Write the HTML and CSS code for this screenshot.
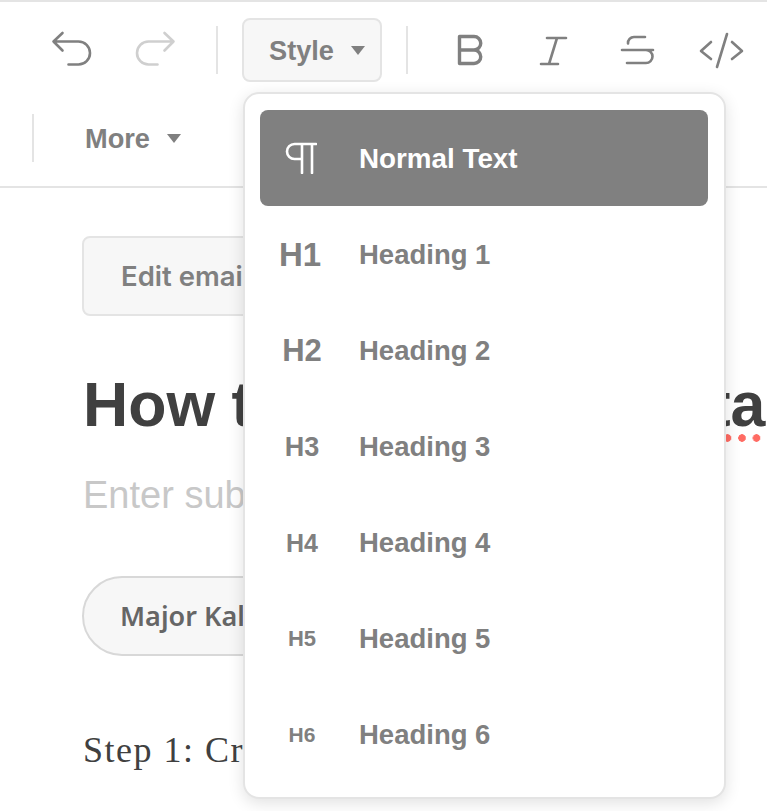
FILE: index.html
```html
<!DOCTYPE html>
<html lang="en">
<head>
<meta charset="utf-8">
<title>Editor</title>
<link rel="stylesheet" href="styles.css">
</head>
<body>
<div class="page">
  <header class="toolbar">
    <div class="row row-first">
      <button class="icon-btn"><svg class="icon" viewBox="51.500 30 40 40"><path d="M62 33l-9 8.500 9 9M53 41.500H78a11.500 11.500 0 0 1 0 23H68"/></svg></button>
      <button class="icon-btn"><svg class="icon icon-off" viewBox="134.500 30 40 40"><path d="M164 33l9 8.500-9 9M173 41.500H148a11.500 11.500 0 0 0 0 23H157"/></svg></button>
      <span class="divider divider-a"></span>
      <button class="style-btn"><span class="label">Style</span><i class="caret"></i></button>
      <span class="divider divider-b"></span>
      <button class="icon-btn mark-btn mark-first"><svg class="icon" viewBox="449 30 40 40"><path class="heavy" d="M459.500 36.500H474a6.750 6.750 0 0 1 0 13.500H459.500M474 50a6.750 6.750 0 0 1 0 13.500H459.500V36.500"/></svg></button>
      <button class="icon-btn mark-btn"><svg class="icon" viewBox="533 30 40 40"><path d="M547 38H566M557 38L549 64M541 64H558"/></svg></button>
      <button class="icon-btn mark-btn"><svg class="icon" viewBox="617 30 40 40"><path d="M645 37H634a6 6 0 0 0-6 6.500M622 50H653M646 50a6.500 6.500 0 0 1 0 13H627"/></svg></button>
      <button class="icon-btn mark-btn"><svg class="icon" viewBox="701 30 40 40"><path d="M711 42L701 51 711 59M732 42L742 51 732 59M727 34L717 67"/></svg></button>
    </div>
    <div class="row row-second">
      <span class="divider"></span>
      <button class="more-btn"><span class="label">More</span><i class="caret"></i></button>
    </div>
  </header>

  <main class="content">
    <button class="edit-btn">Edit email header</button>
    <h1 class="title">How to Read Your <span class="spell">Data</span></h1>
    <p class="subtitle">Enter subtitle</p>
    <button class="author">Major Kalina</button>
    <p class="body-text">Step 1: Create a plan</p>
  </main>

  <ul class="menu">
    <li class="item item-active"><span class="glyph"><svg class="pilcrow" viewBox="0 0 32 32"><path d="M31 2H9.500a7.500 7.500 0 0 0 0 15H17M17 2V31M27 2V31"/></svg></span><span class="normal">Normal Text</span></li>
    <li class="item"><span class="glyph g1">H1</span><span>Heading 1</span></li>
    <li class="item"><span class="glyph g2">H2</span><span>Heading 2</span></li>
    <li class="item"><span class="glyph g3">H3</span><span>Heading 3</span></li>
    <li class="item"><span class="glyph g4">H4</span><span>Heading 4</span></li>
    <li class="item"><span class="glyph g5">H5</span><span>Heading 5</span></li>
    <li class="item"><span class="glyph g6">H6</span><span>Heading 6</span></li>
  </ul>
</div>
</body>
</html>
```
FILE: styles.css
```css
* { box-sizing: border-box; }
html, body { margin: 0; padding: 0; background: #fff; }
body { overflow: hidden; width: 767px; height: 811px; font-family: "Liberation Sans", Arial, sans-serif; }
button { font: inherit; margin: 0; padding: 0; border: 0; background: none; color: inherit; }

.page { position: relative; width: 767px; height: 811px; overflow: hidden; }

.toolbar { border-top: 2px solid #e4e4e4; border-bottom: 2px solid #e4e4e4; height: 188px; padding-top: 17px; color: #808080; }
.row { display: flex; align-items: center; height: 62px; white-space: nowrap; }
.row-first { padding-left: 30px; }
.row-second { margin-top: 26px; padding-left: 32px; }

.icon-btn { flex: none; width: 83px; height: 62px; display: flex; align-items: center; justify-content: center; }
.mark-btn { width: 84px; }
.mark-first { margin-left: 19px; }
.icon { width: 40px; height: 40px; overflow: visible; fill: none; stroke: #808080; stroke-width: 2.600; stroke-linecap: round; stroke-linejoin: round; }
.icon-off { stroke: #cfcfcf; }
.heavy { stroke-width: 3.400; }

.divider { flex: none; width: 2px; height: 48px; background: #e4e4e4; }
.divider-a { margin-left: 20px; }
.divider-b { margin-left: 24px; }

.label { padding-top: 2px; }
.style-btn { flex: none; display: flex; align-items: center; margin-left: 24px; width: 140px; height: 64px; padding-left: 25px; border: 2px solid #e4e4e4; border-radius: 8px; background: #f7f7f7; font-size: 27.200px; font-weight: 700; color: #808080; }
.more-btn { display: flex; align-items: center; margin-left: 51px; font-size: 27.200px; font-weight: 700; color: #808080; }
.caret { display: block; width: 0; height: 0; margin-left: 17px; border-left: 7.500px solid transparent; border-right: 7.500px solid transparent; border-top: 9px solid #808080; }

.content { padding-left: 83px; white-space: nowrap; }
.edit-btn { display: block; margin: 48px 0 0 -1px; width: 300px; height: 80px; padding: 0 0 1px 37px; text-align: left; border: 2px solid #e4e4e4; border-radius: 8px; background: #f7f7f7; font-family: Inter, sans-serif; font-weight: 600; font-size: 27.500px; color: #808080; }
.title { margin: 52px 0 0; font-size: 62.600px; line-height: 72px; font-weight: 700; word-spacing: -1px; color: #404040; }
.spell { position: relative; }
.spell::after { content: ""; position: absolute; left: 0; right: -14px; bottom: -3px; height: 8px; background: radial-gradient(circle at 4px 4px, #ff6b63 3.500px, transparent 4px) 6.500px 0 / 14.500px 8px repeat-x; }
.subtitle { margin: 31px 0 0; font-size: 38px; line-height: 48px; color: #c8c8c8; }
.author { display: block; margin: 57px 0 0 -1px; width: 300px; height: 80px; padding: 0 0 2px 36px; text-align: left; border: 2px solid #d8d8d8; border-radius: 40px; background: #f7f7f7; font-family: "Noto Sans", sans-serif; font-weight: 600; font-size: 27px; color: #666; }
.body-text { margin: 69px 0 0; font-family: "Liberation Serif", serif; font-size: 36px; line-height: 50px; letter-spacing: 1.500px; color: #404040; }

.menu { position: absolute; left: 243px; top: 92px; width: 483px; height: 707px; margin: 0; padding: 16px 16px 0 15px; list-style: none; background: #fff; border: 2px solid #e4e4e4; border-radius: 16px; box-shadow: 0 4px 16px rgba(0, 0, 0, 0.12); }
.item { display: flex; align-items: center; height: 96px; padding-top: 2px; border-radius: 8px; font-size: 27.500px; font-weight: 700; color: #808080; }
.item-active { background: #808080; color: #fff; }
.normal { font-size: 27.800px; }
.glyph { flex: none; width: 82px; margin-right: 17px; text-align: center; }
.pilcrow { display: block; width: 32px; height: 32px; margin: -2px auto 0; fill: none; stroke: #fff; stroke-width: 2.600; stroke-linecap: round; }
.g1 { font-size: 33px; padding-right: 2px; }
.g2 { font-size: 31px; padding-left: 2px; }
.g3 { font-size: 27px; padding-left: 2px; }
.g4 { font-size: 25px; padding-left: 2px; }
.g5 { font-size: 22px; padding-left: 2px; }
.g6 { font-size: 21px; padding-left: 2px; }
```
